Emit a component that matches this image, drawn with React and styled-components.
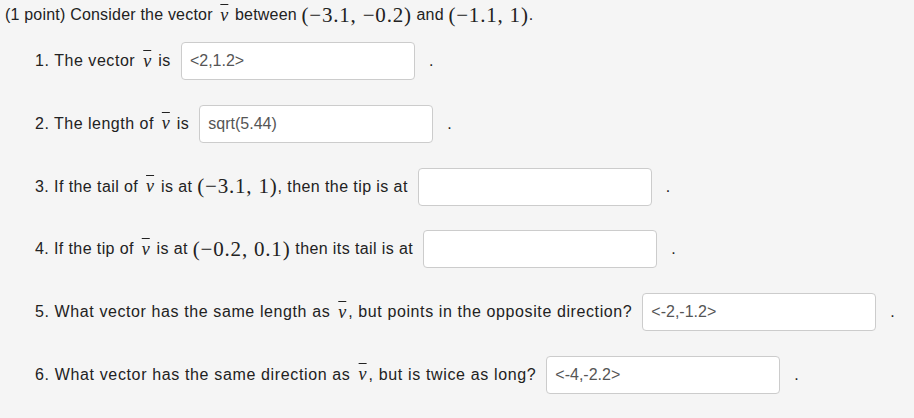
import React from 'react';
import styled, { createGlobalStyle } from 'styled-components';

const GlobalStyle = createGlobalStyle`
  body {
    margin: 0;
    background: #f5f5f5;
    font-family: "Liberation Sans", Arial, sans-serif;
    color: #222;
  }
`;

const Page = styled.div`
  width: 914px;
  height: 418px;
  box-sizing: border-box;
  padding: 5px 0 0 5px;
  background: #f5f5f5;
  overflow: hidden;
`;

const Header = styled.div`
  font-size: 16px;
  letter-spacing: 0.2px;
  line-height: 20px;
  height: 20px;
  display: flex;
  align-items: center;
  white-space: pre;
`;

const List = styled.div`
  display: flex;
  flex-direction: column;
  gap: 24.8px;
  margin-top: 17px;
  padding-left: 30px;
`;

const Row = styled.div`
  display: flex;
  align-items: center;
  height: 38px;
  font-size: 16px;
  letter-spacing: ${p => p.$ls || 0}px;
  white-space: pre;
`;

const Answer = styled.div`
  width: 234px;
  height: 38px;
  box-sizing: border-box;
  margin-left: 10px;
  padding: 0 8px;
  display: flex;
  align-items: center;
  background: #fff;
  border: 1px solid #ccc;
  border-radius: 4px;
  font-size: 16px;
  letter-spacing: 0;
  color: #555;
`;

const Dot = styled.span`
  margin-left: 14px;
  font-size: 16px;
`;

const Math = styled.span`
  font-family: "Liberation Serif", "Times New Roman", serif;
  font-size: 21px;
  letter-spacing: 0.8px;
`;

const VecV = styled.span`
  font-family: "Liberation Serif", "Times New Roman", serif;
  font-style: italic;
  font-size: 18px;
  letter-spacing: 0;
  text-decoration: overline;
  text-decoration-thickness: 1px;
  margin: 0 1px 0 2px;
  padding: 0 1px;
`;

const V = () => <VecV>v</VecV>;

const rows = [
  { ls: 0.55, label: <>1. The vector <V /> is</>, value: '<2,1.2>' },
  { ls: 0.5, label: <>2. The length of <V /> is</>, value: 'sqrt(5.44)' },
  { ls: 0.42, label: <>3. If the tail of <V /> is at <Math>(−3.1, 1)</Math>, then the tip is at</>, value: '' },
  { ls: 0.4, label: <>4. If the tip of <V /> is at <Math>(−0.2, 0.1)</Math> then its tail is at</>, value: '' },
  { ls: 0.6, label: <>5. What vector has the same length as <V />, but points in the opposite direction?</>, value: '<-2,-1.2>' },
  { ls: 0.64, label: <>6. What vector has the same direction as <V />, but is twice as long?</>, value: '<-4,-2.2>' },
];

export default function App() {
  return (
    <Page>
      <GlobalStyle />
      <Header>
        (1 point) Consider the vector <V /> between <Math>(−3.1, −0.2)</Math> and <Math>(−1.1, 1)</Math>.
      </Header>
      <List>
        {rows.map((r, i) => (
          <Row key={i} $ls={r.ls}>
            {r.label}
            <Answer>{r.value}</Answer>
            <Dot>.</Dot>
          </Row>
        ))}
      </List>
    </Page>
  );
}
